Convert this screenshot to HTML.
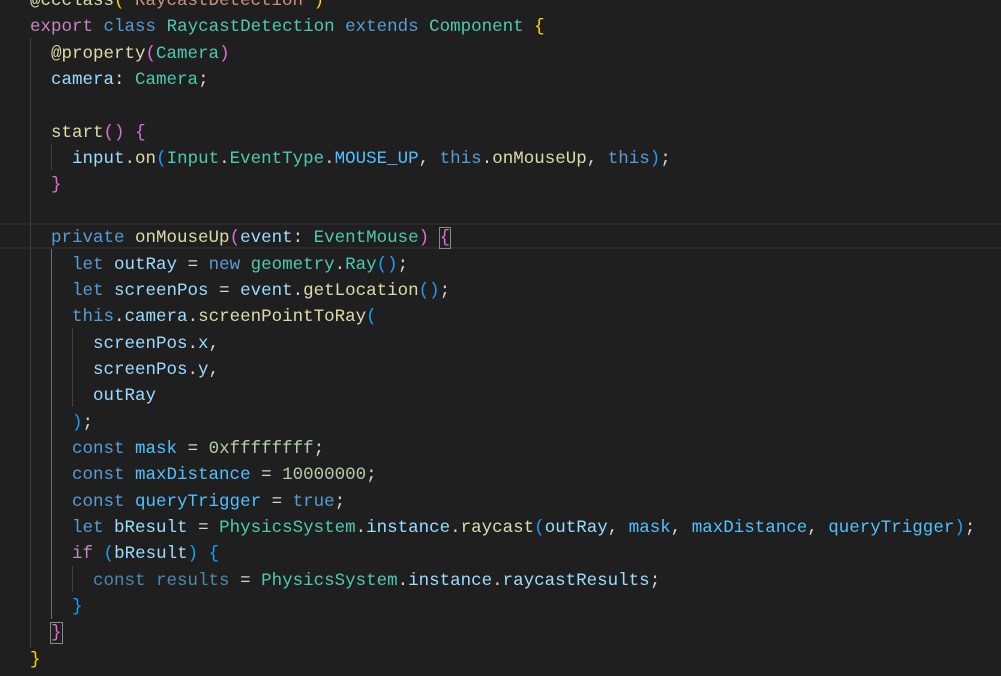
<!DOCTYPE html>
<html><head><meta charset="utf-8"><style>
html,body{margin:0;padding:0;background:#1f1f1f;width:1001px;height:676px;overflow:hidden}
.l{position:absolute;left:30px;height:26.35px;line-height:26.35px;white-space:pre;font-family:"Liberation Mono",monospace;font-size:17.5px;color:#d4d4d4;margin-top:2px}
.k{color:#569cd6}.p{color:#c586c0}.t{color:#4ec9b0}.v{color:#9cdcfe}.f{color:#dcdcaa}.n{color:#b5cea8}.s{color:#ce9178}.c{color:#4fc1ff}
.b1{color:#ffd700}.b2{color:#da70d6}.b3{color:#179fff}.dim{color:#4b89b0}
.g{position:absolute;width:1px;background:#404040}
.box{outline:1px solid #888;}
</style></head><body>
<div style="position:absolute;left:0;top:223px;width:1001px;height:22px;border-top:2px solid #2a2a2a;border-bottom:2px solid #2a2a2a"></div>
<div class="g" style="left:30px;top:38px;height:610px"></div>
<div class="g" style="left:51px;top:144px;height:26px"></div>
<div class="g" style="left:51px;top:249px;height:370px;background:#707070"></div>
<div class="g" style="left:72px;top:328px;height:79px"></div>
<div class="g" style="left:72px;top:566px;height:26px"></div>
<div class="l" style="top:-14px"><span class="f">@ccclass</span><span class="b1">(</span><span class="s">'RaycastDetection'</span><span class="b1">)</span></div>
<div class="l" style="top:12.35px"><span class="p">export</span> <span class="k">class</span> <span class="t">RaycastDetection</span> <span class="k">extends</span> <span class="t">Component</span> <span class="b1">{</span></div>
<div class="l" style="top:38.7px">  <span class="f">@property</span><span class="b2">(</span><span class="t">Camera</span><span class="b2">)</span></div>
<div class="l" style="top:65.05px">  <span class="v">camera</span>: <span class="t">Camera</span>;</div>
<div class="l" style="top:117.75px">  <span class="f">start</span><span class="b2">()</span> <span class="b2">{</span></div>
<div class="l" style="top:144.1px">    <span class="v">input</span>.<span class="f">on</span><span class="b3">(</span><span class="t">Input</span>.<span class="t">EventType</span>.<span class="c">MOUSE_UP</span>, <span class="k">this</span>.<span class="f">onMouseUp</span>, <span class="k">this</span><span class="b3">)</span>;</div>
<div class="l" style="top:170.45px">  <span class="b2">}</span></div>
<div class="l" style="top:223.15px">  <span class="k">private</span> <span class="f">onMouseUp</span><span class="b2">(</span><span class="v">event</span>: <span class="t">EventMouse</span><span class="b2">)</span> <span class="b2 box">{</span></div>
<div class="l" style="top:249.5px">    <span class="k">let</span> <span class="v">outRay</span> = <span class="k">new</span> <span class="t">geometry</span>.<span class="t">Ray</span><span class="b3">()</span>;</div>
<div class="l" style="top:275.85px">    <span class="k">let</span> <span class="v">screenPos</span> = <span class="v">event</span>.<span class="f">getLocation</span><span class="b3">()</span>;</div>
<div class="l" style="top:302.2px">    <span class="k">this</span>.<span class="v">camera</span>.<span class="f">screenPointToRay</span><span class="b3">(</span></div>
<div class="l" style="top:328.55px">      <span class="v">screenPos</span>.<span class="v">x</span>,</div>
<div class="l" style="top:354.9px">      <span class="v">screenPos</span>.<span class="v">y</span>,</div>
<div class="l" style="top:381.25px">      <span class="v">outRay</span></div>
<div class="l" style="top:407.6px">    <span class="b3">)</span>;</div>
<div class="l" style="top:433.95px">    <span class="k">const</span> <span class="c">mask</span> = <span class="n">0xffffffff</span>;</div>
<div class="l" style="top:460.3px">    <span class="k">const</span> <span class="c">maxDistance</span> = <span class="n">10000000</span>;</div>
<div class="l" style="top:486.65px">    <span class="k">const</span> <span class="c">queryTrigger</span> = <span class="k">true</span>;</div>
<div class="l" style="top:513px">    <span class="k">let</span> <span class="v">bResult</span> = <span class="t">PhysicsSystem</span>.<span class="v">instance</span>.<span class="f">raycast</span><span class="b3">(</span><span class="v">outRay</span>, <span class="c">mask</span>, <span class="c">maxDistance</span>, <span class="c">queryTrigger</span><span class="b3">)</span>;</div>
<div class="l" style="top:539.35px">    <span class="p">if</span> <span class="b3">(</span><span class="v">bResult</span><span class="b3">)</span> <span class="b3">{</span></div>
<div class="l" style="top:565.7px">      <span class="dim">const</span> <span class="dim">results</span> = <span class="t">PhysicsSystem</span>.<span class="v">instance</span>.<span class="v">raycastResults</span>;</div>
<div class="l" style="top:592.05px">    <span class="b3">}</span></div>
<div class="l" style="top:618.4px">  <span class="b2 box">}</span></div>
<div class="l" style="top:644.75px"><span class="b1">}</span></div>
</body></html>
